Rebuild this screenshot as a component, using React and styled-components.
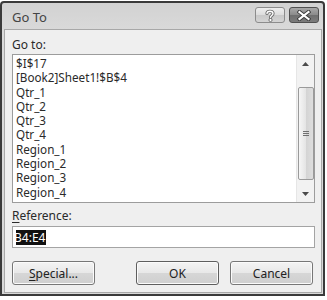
import { createGlobalStyle } from "styled-components";
import styled from "styled-components";

const names = ["$I$17", "[Book2]Sheet1!$B$4", "Qtr_1", "Qtr_2", "Qtr_3", "Qtr_4", "Region_1", "Region_2", "Region_3", "Region_4"];

const GlobalStyle = createGlobalStyle`
  body {
    margin: 0;
    background: #ffffff;
    font-family: "Noto Sans", "Liberation Sans", sans-serif;
  }
`;

export default function App() {
  return (
    <>
      <GlobalStyle />
      <Window>
        <TitleBar>
          <Title>Go To</Title>
          <CaptionButtons>
            <CaptionButton>
              <svg width="12" height="13" viewBox="0 0 12 13">
                <path d="M3 4.5 C3 1.5 9 1.5 9 4.5 C9 6.5 6.5 6.5 6.5 8.5" fill="none" stroke="#6a6a6a" strokeWidth="3.2" strokeLinecap="round" />
                <path d="M3 4.5 C3 1.5 9 1.5 9 4.5 C9 6.5 6.5 6.5 6.5 8.5" fill="none" stroke="#ffffff" strokeWidth="1.4" strokeLinecap="round" />
                <circle cx="6.5" cy="11" r="1.6" fill="#ffffff" stroke="#6a6a6a" strokeWidth="0.9" />
              </svg>
            </CaptionButton>
            <CaptionButton close>
              <svg width="14" height="11" viewBox="0 0 14 11">
                <path d="M2.5 2 L11.5 9 M11.5 2 L2.5 9" stroke="#3a3a3a" strokeWidth="4" strokeLinecap="square" />
                <path d="M2.5 2 L11.5 9 M11.5 2 L2.5 9" stroke="#ffffff" strokeWidth="2.2" strokeLinecap="square" />
              </svg>
            </CaptionButton>
          </CaptionButtons>
        </TitleBar>
        <Client>
          <Label>Go to:</Label>
          <ListBox>
            <Items>
              {names.map((name) => (
                <Item key={name}>{name}</Item>
              ))}
            </Items>
            <ScrollBar>
              <Arrow>
                <svg width="7" height="4" viewBox="0 0 7 4"><path d="M0 4 L3.5 0 L7 4 Z" fill="#4a4a4a" /></svg>
              </Arrow>
              <Track>
                <Thumb style={{ marginTop: 15, height: 93 }}>
                  <Grip />
                  <Grip />
                  <Grip />
                </Thumb>
              </Track>
              <Arrow>
                <svg width="7" height="4" viewBox="0 0 7 4"><path d="M0 0 L3.5 4 L7 0 Z" fill="#4a4a4a" /></svg>
              </Arrow>
            </ScrollBar>
          </ListBox>
          <Label reference>
            <u>R</u>eference:
          </Label>
          <Field>
            <Clip>
              <Selected>B4:E4</Selected>
            </Clip>
          </Field>
          <ButtonRow>
            <Button>
              <u>S</u>pecial...
            </Button>
            <Spacer />
            <Button isDefault>OK</Button>
            <Button>Cancel</Button>
          </ButtonRow>
        </Client>
      </Window>
    </>
  );
}

const Window = styled.div`
  box-sizing: border-box;
  width: 325px;
  height: 295px;
  margin-top: 1px;
  border: 2px solid #3a3a3a;
  border-radius: 4px 4px 0 0;
  background: linear-gradient(#d2d2d2, #dadada 30px, #d8d8d8);
  display: flex;
  flex-direction: column;
`;

const TitleBar = styled.div`
  height: 26px;
  display: flex;
  align-items: flex-start;
  padding: 0 4px 0 10px;
`;

const Title = styled.div`
  flex: 1;
  font-size: 13px;
  line-height: 16px;
  margin-top: 6px;
  color: #444444;
`;

const CaptionButtons = styled.div`
  display: flex;
  gap: 4px;
  margin-top: 4px;
`;

const CaptionButton = styled.div`
  box-sizing: border-box;
  width: 30px;
  height: 16px;
  border: 1px solid ${({ close }) => (close ? "#505050" : "#8c8c8c")};
  border-radius: 3px;
  background: ${({ close }) =>
    close
      ? "linear-gradient(#a8a8a8, #8a8a8a 50%, #6e6e6e 51%, #7c7c7c)"
      : "linear-gradient(#eeeeee, #dcdcdc 50%, #c8c8c8 51%, #d4d4d4)"};
  display: flex;
  align-items: center;
  justify-content: center;
`;

const Client = styled.div`
  flex: 1;
  margin: 0 1px 1px 2px;
  border: 1px solid #a8a8a8;
  background: #efefef;
  display: flex;
  flex-direction: column;
  padding: 7px 6px 0 7px;
  font-size: 12px;
  color: #2a2a2a;
`;

const Label = styled.div`
  line-height: 15px;
  margin-top: ${({ reference }) => (reference ? "5px" : "0")};
  u {
    text-decoration-thickness: 1px;
    text-underline-offset: 2px;
  }
`;

const ListBox = styled.div`
  box-sizing: border-box;
  height: 149px;
  margin-top: 2px;
  border: 1px solid #9c9c9c;
  background: #ffffff;
  display: flex;
  overflow: hidden;
`;

const Items = styled.div`
  flex: 1;
  padding: 1px 0 0 3px;
  overflow: hidden;
  font-size: 11.7px;
`;

const Item = styled.div`
  line-height: 14.3px;
  white-space: nowrap;
`;

const ScrollBar = styled.div`
  width: 17px;
  background: #f2f2f2;
  border-left: 1px solid #e6e6e6;
  display: flex;
  flex-direction: column;
`;

const Arrow = styled.div`
  height: 17px;
  display: flex;
  align-items: center;
  justify-content: center;
`;

const Track = styled.div`
  flex: 1;
  display: flex;
  flex-direction: column;
  align-items: center;
`;

const Thumb = styled.div`
  box-sizing: border-box;
  width: 16px;
  border: 1px solid #9a9a9a;
  border-radius: 2px;
  background: linear-gradient(90deg, #f6f6f6, #e4e4e4 50%, #d4d4d4 51%, #dedede);
  display: flex;
  flex-direction: column;
  align-items: center;
  justify-content: center;
  gap: 1px;
`;

const Grip = styled.div`
  width: 6px;
  height: 1px;
  background: #707070;
`;

const Field = styled.div`
  box-sizing: border-box;
  height: 22px;
  margin-top: 3px;
  border: 1px solid #a4a4a4;
  background: #ffffff;
  padding: 2px 3px;
  display: flex;
  align-items: center;
`;

const Clip = styled.div`
  overflow: hidden;
  flex: 1;
  line-height: 15px;
`;

const Selected = styled.span`
  margin-left: -2px;
  background: #111111;
  color: #ffffff;
  padding: 0 1px 0 0;
`;

const ButtonRow = styled.div`
  display: flex;
  gap: 11px;
  margin-top: 13px;
  padding-right: 2px;
`;

const Spacer = styled.div`
  flex: 1;
`;

const Button = styled.div`
  box-sizing: border-box;
  width: 83px;
  height: 24px;
  border: 1px solid ${({ isDefault }) => (isDefault ? "#5e5e5e" : "#777777")};
  border-radius: 3px;
  background: linear-gradient(#f4f4f4, #e8e8e8 48%, #d6d6d6 52%, #cfcfcf);
  box-shadow: inset 0 0 0 1px #fbfbfb;
  display: flex;
  align-items: center;
  justify-content: center;
  color: #222222;
  u {
    text-decoration-thickness: 1px;
    text-underline-offset: 2px;
  }
`;
